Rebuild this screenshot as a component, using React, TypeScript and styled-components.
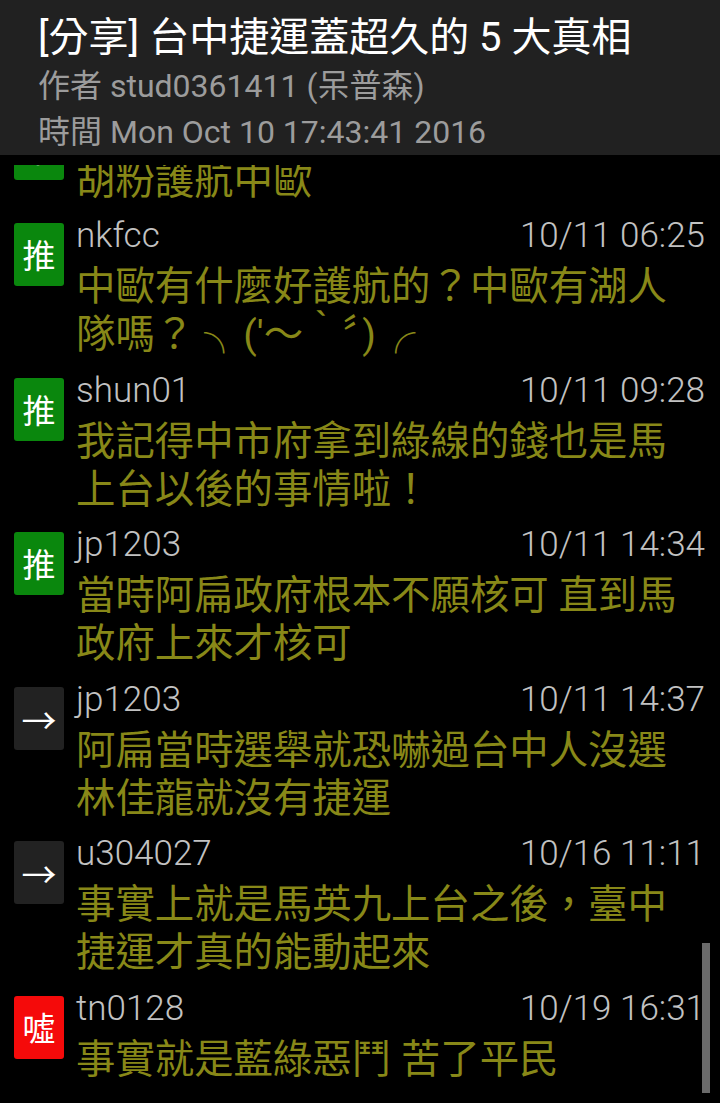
import React from "react";
import styled, { createGlobalStyle } from "styled-components";

const GlobalStyle = createGlobalStyle`
  html, body {
    margin: 0;
    padding: 0;
    background: #000000;
  }
  * {
    box-sizing: border-box;
  }
`;

const FONT = `Roboto, "Noto Sans CJK TC", "Noto Sans", sans-serif`;

type Tag = "push" | "boo" | "arrow";

interface Comment {
  tag: Tag;
  user: string;
  time: string;
  lines: string[];
}

const comments: Comment[] = [
  { tag: "push", user: "", time: "", lines: ["胡粉護航中歐"] },
  {
    tag: "push",
    user: "nkfcc",
    time: "10/11 06:25",
    lines: ["中歐有什麼好護航的？中歐有湖人", "隊嗎？ ╮(′～‵〞)╭"],
  },
  {
    tag: "push",
    user: "shun01",
    time: "10/11 09:28",
    lines: ["我記得中市府拿到綠線的錢也是馬", "上台以後的事情啦！"],
  },
  {
    tag: "push",
    user: "jp1203",
    time: "10/11 14:34",
    lines: ["當時阿扁政府根本不願核可 直到馬", "政府上來才核可"],
  },
  {
    tag: "arrow",
    user: "jp1203",
    time: "10/11 14:37",
    lines: ["阿扁當時選舉就恐嚇過台中人沒選", "林佳龍就沒有捷運"],
  },
  {
    tag: "arrow",
    user: "u304027",
    time: "10/16 11:11",
    lines: ["事實上就是馬英九上台之後，臺中", "捷運才真的能動起來"],
  },
  {
    tag: "boo",
    user: "tn0128",
    time: "10/19 16:31",
    lines: ["事實就是藍綠惡鬥 苦了平民"],
  },
];

const tagLabel: Record<Tag, string> = {
  push: "推",
  boo: "噓",
  arrow: "→",
};

const tagColor: Record<Tag, string> = {
  push: "#0a870d",
  boo: "#f50a0a",
  arrow: "#222222",
};

const Screen = styled.div`
  width: 720px;
  height: 1103px;
  display: flex;
  flex-direction: column;
  background: #000000;
  overflow: hidden;
  font-family: ${FONT};
`;

const Header = styled.header`
  flex: 0 0 155px;
  background: #212121;
  padding: 13px 20px 0 38px;
  display: flex;
  flex-direction: column;
`;

const Title = styled.div`
  color: #ffffff;
  font-size: 40px;
  line-height: 50px;
  white-space: nowrap;
`;

const MetaLine = styled.div`
  color: #9c9c9c;
  font-size: 32px;
  line-height: 46px;
  white-space: nowrap;
`;

const Viewport = styled.div`
  flex: 1;
  margin-top: 10px;
  position: relative;
  overflow: hidden;
`;

const Feed = styled.div<{ $scroll: number }>`
  display: flex;
  flex-direction: column;
  margin-top: ${(p) => -p.$scroll}px;
`;

const Item = styled.div`
  display: flex;
  align-items: flex-start;
  padding: 4px 15px 5.5px 14px;
`;

const Badge = styled.div<{ $tag: Tag }>`
  flex: 0 0 50px;
  height: 63px;
  margin-top: 9px;
  border-radius: 3px;
  background: ${(p) => tagColor[p.$tag]};
  color: #ffffff;
  display: flex;
  align-items: center;
  justify-content: center;
  font-family: "Noto Sans CJK TC", sans-serif;
  font-size: ${(p) => (p.$tag === "arrow" ? "35px" : "33px")};
  line-height: 1;
`;

const Body = styled.div`
  flex: 1;
  min-width: 0;
  margin-left: 12px;
`;

const MetaRow = styled.div`
  height: 44px;
  display: flex;
  align-items: center;
  justify-content: space-between;
  color: #c2c2c2;
  font-size: 35px;
  font-weight: 300;
  line-height: 44px;
  white-space: nowrap;
`;

const Content = styled.div`
  margin-top: 5px;
  color: #888818;
  font-size: 39.4px;
  line-height: 48px;
`;

const Line = styled.div`
  white-space: pre;
`;

const ScrollThumb = styled.div`
  position: absolute;
  right: 10px;
  top: 778px;
  width: 8px;
  height: 150px;
  background: #6a6a6a;
`;

export default function App() {
  return (
    <>
      <GlobalStyle />
      <Screen>
        <Header>
          <Title>[分享] 台中捷運蓋超久的 5 大真相</Title>
          <MetaLine>作者 stud0361411 (呆普森)</MetaLine>
          <MetaLine>時間 Mon Oct 10 17:43:41 2016</MetaLine>
        </Header>
        <Viewport>
          <Feed $scroll={61.5}>
            {comments.map((c, i) => (
              <Item key={i}>
                <Badge $tag={c.tag}>{tagLabel[c.tag]}</Badge>
                <Body>
                  <MetaRow>
                    <span>{c.user}</span>
                    <span>{c.time}</span>
                  </MetaRow>
                  <Content>
                    {c.lines.map((l, j) => (
                      <Line key={j}>{l}</Line>
                    ))}
                  </Content>
                </Body>
              </Item>
            ))}
          </Feed>
          <ScrollThumb />
        </Viewport>
      </Screen>
    </>
  );
}
